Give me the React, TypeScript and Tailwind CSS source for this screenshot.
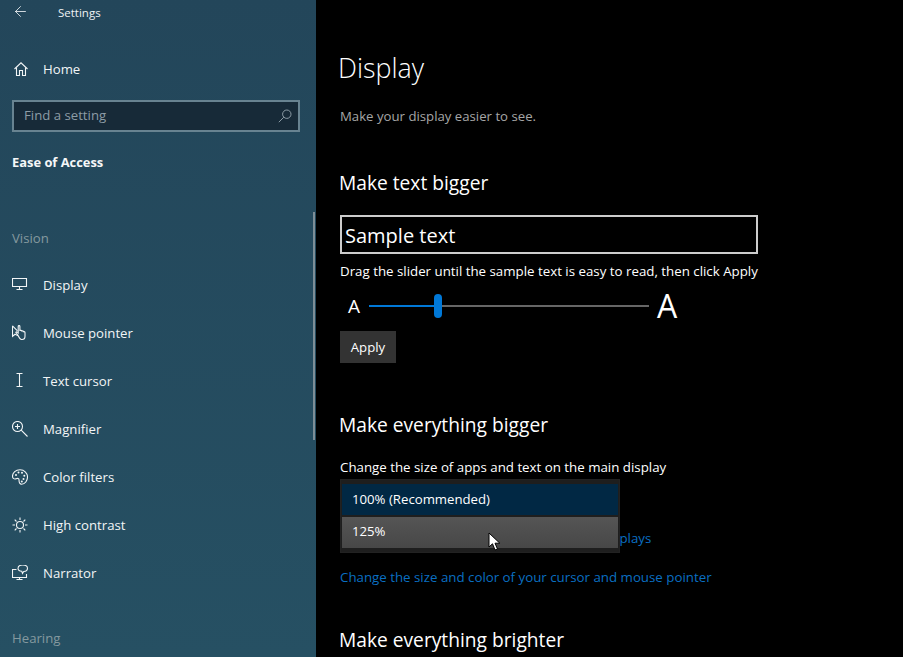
import { ArrowLeft } from 'lucide-react';
import type { ReactNode } from 'react';

function HomeIcon() {
  return (
    <svg className="ml-0.5" width="14" height="14" viewBox="0 0 14 14" fill="none" stroke="currentColor" strokeWidth="1.1">
      <path d="M.5 7 7 .8 13.500 7" />
      <path d="M2.500 5.500v8h3V8.500h3v5h3v-8" />
    </svg>
  );
}

function DisplayIcon() {
  return (
    <svg width="16" height="16" viewBox="0 0 16 16" fill="none" stroke="currentColor" strokeWidth="1.1">
      <path d="M.5 1.500h14v8H.5zM7.500 9.500v2.500M4.500 12.500h6" />
    </svg>
  );
}

function MousePointerIcon() {
  return (
    <svg width="17" height="16" viewBox="0 0 17 16" fill="none" stroke="currentColor" strokeWidth="1.1">
      <path d="M.5 .8v10.500l2.600-2.100 3 1.500M.5 .8l5 5" />
      <path d="M5.500 9.500 3.800 7.300c.6-.8 1.600-.3 2.400.6V1.500c0-1.200 1.700-1.200 1.700 0V6c0-1 1.700-1 1.700 0v.6c0-1 1.700-1 1.700 0v.7c0-1 1.700-.9 1.700.2v3.700c0 2-1.300 3.300-3 3.300H9.500C7.800 14.500 6.700 11.500 5.500 9.500Z" />
    </svg>
  );
}

function TextCursorIcon() {
  return (
    <svg width="16" height="16" viewBox="0 0 16 16" fill="none" stroke="currentColor" strokeWidth="1.1">
      <path d="M4.500 .5h6M4.500 13.500h6M7.500 .5v13" />
    </svg>
  );
}

function MagnifierIcon() {
  return (
    <svg width="16" height="16" viewBox="0 0 16 16" fill="none" stroke="currentColor" strokeWidth="1.1">
      <circle cx="5.500" cy="5.500" r="5" />
      <path d="M3 5.500h5M5.500 3v5M9.200 9.200l6.300 6.300" />
    </svg>
  );
}

function PaletteIcon() {
  return (
    <svg width="16" height="16" viewBox="0 0 16 16" fill="none" stroke="currentColor" strokeWidth="1.1">
      <path d="M8 .8C3.800 .8.500 3.500.5 7.200c0 2.500 2 3.100 3.500 2.600s3-.8 3 1 .6 4.400 2.600 4.400c3.400 0 5.900-3.500 5.900-7.200S12.500.8 8 .8Z" />
      <g fill="currentColor" stroke="none">
        <circle cx="4" cy="6" r="1" />
        <circle cx="6.500" cy="3.600" r="1" />
        <circle cx="10" cy="3.800" r="1" />
        <circle cx="12.300" cy="6.800" r="1" />
        <circle cx="11.500" cy="10" r="1" />
        <circle cx="9.800" cy="12.600" r="1" />
      </g>
    </svg>
  );
}

function ContrastSunIcon() {
  return (
    <svg width="16" height="16" viewBox="0 0 16 16" fill="none" stroke="currentColor" strokeWidth="1.1">
      <circle cx="8" cy="8" r="3.500" />
      <path d="M8 .5v2.500M8 13v2.500M.5 8H3M13 8h2.500M2.700 2.700l1.800 1.800M11.500 11.500l1.800 1.800M13.300 2.700l-1.800 1.800M4.500 11.500l-1.800 1.800" />
    </svg>
  );
}

function NarratorIcon() {
  return (
    <svg width="17" height="17" viewBox="0 1 17 17" fill="none" stroke="currentColor" strokeWidth="1.1">
      <path d="M4.500 5.500H.5v8h14V10M7.500 13.500v2M4.500 15.500h6" />
      <path d="M6 4.500C6 2.300 8 1 10.800 1s4.700 1.300 4.700 3.300c0 1.900-1.700 3.100-3.800 3.200L10.500 9.500 9.800 7.300C7.500 7 6 6.100 6 4.500Z" />
    </svg>
  );
}

function NavItem({ icon, label }: { icon: ReactNode; label: string }) {
  return (
    <div className="flex h-12 items-center text-[#f2f5f6]">
      <div className="flex w-[31px] shrink-0 items-center">{icon}</div>
      <span className="pt-0.5 text-[13.2px]">{label}</span>
    </div>
  );
}

function SectionTitle({ children, className }: { children: ReactNode; className: string }) {
  return <h2 className={`text-[19.2px] leading-[26px] text-white ${className}`}>{children}</h2>;
}

export default function App() {
  return (
    <div className="flex h-[657px] w-[903px] overflow-hidden bg-black font-['Open_Sans','Noto_Sans',sans-serif]">
      {/* left nav */}
      <aside className="relative h-full w-[316px] shrink-0 bg-gradient-to-b from-[#23465a] to-[#265063] px-3">
        <div className="flex h-[26px] items-center text-[#eef2f4]">
          <ArrowLeft size={17} strokeWidth={1.2} className="-mt-1" />
          <span className="ml-[29px] text-[11.5px]">Settings</span>
        </div>
        <div className="mt-[19px]">
          <NavItem icon={<HomeIcon />} label="Home" />
        </div>
        <div className="mt-[7px] flex h-8 w-[288px] items-center justify-between border-2 border-[#688391] bg-[#172a38] pr-1.5 pl-2.5 text-[13.2px] text-[#8d9ca6]">
          <span className="pb-px">Find a setting</span>
          <svg width="14" height="14" viewBox="0 0 14 14" fill="none" stroke="currentColor" strokeWidth="1">
            <circle cx="8.800" cy="5.200" r="4.200" />
            <path d="M5.800 8.200.8 13.200" />
          </svg>
        </div>
        <p className="mt-5 text-[12.9px] leading-5 font-bold text-[#f5f7f8]">Ease of Access</p>
        <p className="mt-[56px] text-[13.2px] leading-5 text-[#84999f]">Vision</p>
        <div className="mt-[13px]">
          <NavItem icon={<DisplayIcon />} label="Display" />
          <NavItem icon={<MousePointerIcon />} label="Mouse pointer" />
          <NavItem icon={<TextCursorIcon />} label="Text cursor" />
          <NavItem icon={<MagnifierIcon />} label="Magnifier" />
          <NavItem icon={<PaletteIcon />} label="Color filters" />
          <NavItem icon={<ContrastSunIcon />} label="High contrast" />
          <NavItem icon={<NarratorIcon />} label="Narrator" />
        </div>
        <p className="mt-[31px] text-[13.2px] leading-5 text-[#84999f]">Hearing</p>
        {/* scrollbar */}
        <div className="absolute top-[212px] right-[1px] h-[228px] w-0.5 bg-[#7d8e97]" />
      </aside>

      {/* main content */}
      <main className="relative min-w-0 flex-1 pl-[24px] text-white">
        <h1 className="mt-[49px] ml-[-2px] text-[26.8px] leading-[38px] font-light">Display</h1>
        <p className="mt-[19px] text-[13.2px] leading-[20px] text-[#a6a6a6]">Make your display easier to see.</p>
        <SectionTitle className="mt-[44px] ml-[-1px]">Make text bigger</SectionTitle>
        <div className="mt-[19px] flex h-[39px] w-[418px] items-center border-2 border-[#cccccc] pt-0.5 pl-[3px] text-[20px]">
          Sample text
        </div>
        <p className="mt-[7px] text-[13.3px] leading-5">Drag the slider until the sample text is easy to read, then click Apply</p>
        <div className="mt-[11px] flex h-7 items-center">
          <span className="ml-2 w-[21px] text-[19px]">A</span>
          <div className="relative h-0.5 w-[280px] bg-[#666666]">
            <div className="h-full w-[69px] bg-[#0078d7]" />
            <div className="absolute top-[-11px] left-[65px] h-6 w-2 rounded-full bg-[#0078d7]" />
          </div>
          <span className="ml-2 text-[32px] leading-none">A</span>
        </div>
        <button className="mt-[11px] block h-8 w-14 bg-[#333333] pt-0.5 text-[13.2px]">Apply</button>
        <SectionTitle className="mt-[49px] ml-[-1px]">Make everything bigger</SectionTitle>
        <p className="mt-[19px] text-[13.3px] leading-5">Change the size of apps and text on the main display</p>
        <p className="mt-[51px] text-[13.3px] leading-5 text-[#0a6fc2]">Change the size of apps and text on other displays</p>
        <p className="mt-[19px] text-[13.3px] leading-5 text-[#0a6fc2]">Change the size and color of your cursor and mouse pointer</p>
        <SectionTitle className="mt-[40px] ml-[-1px]">Make everything brighter</SectionTitle>

        {/* open dropdown */}
        <div className="absolute top-[479px] left-[24px] flex h-[74px] w-[280px] flex-col gap-0.5 border border-[#222222] bg-[#1e1e1e] px-px py-1 text-[13.2px]">
          <div className="flex h-[31px] items-center bg-[#012844] pl-[10px]">100% (Recommended)</div>
          <div className="flex h-[31px] items-center bg-gradient-to-b from-[#555555] to-[#474747] pb-0.5 pl-[10px]">125%</div>
        </div>

        {/* mouse cursor */}
        <svg className="absolute top-[532px] left-[172px]" width="13" height="20" viewBox="0 0 13 20">
          <path d="M1 1v14l3.500-3.200L7 18l2.500-1-2.500-5.800h4.800Z" fill="#ffffff" stroke="#000000" strokeWidth="1" />
        </svg>
      </main>
    </div>
  );
}
